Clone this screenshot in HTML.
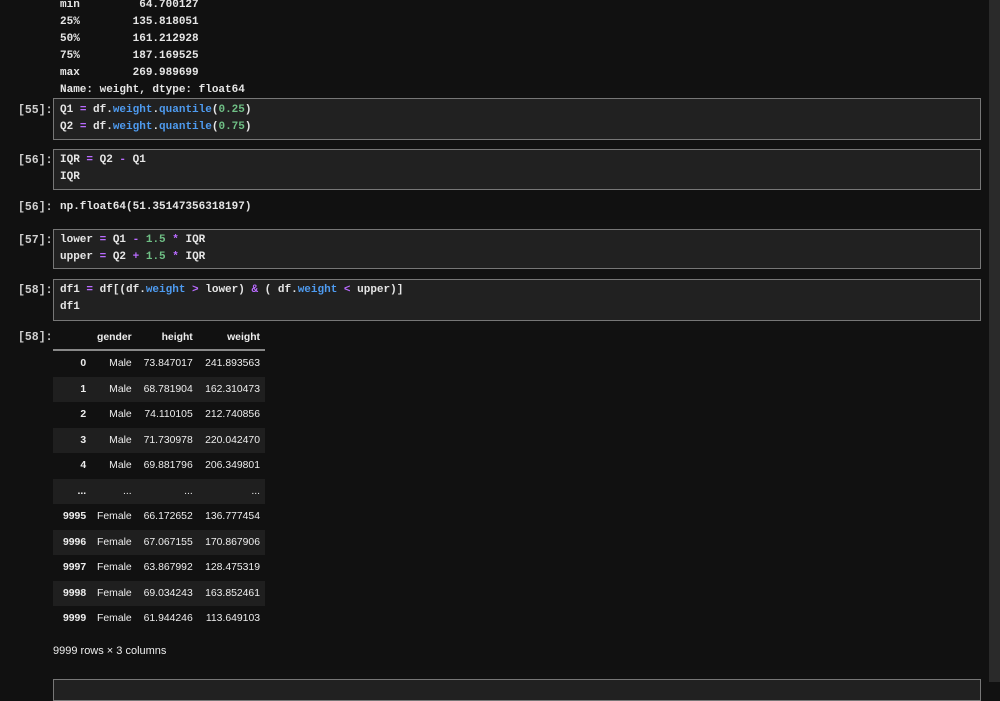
<!DOCTYPE html>
<html><head><style>
body{margin:0;width:1000px;height:682px;background:#111;overflow:hidden;position:relative;font-family:"Liberation Mono",monospace;color:#e6e6e6}
.m{position:absolute;font-size:11px;font-weight:bold;line-height:17px;white-space:pre;color:#e6e6e6}
.p{position:absolute;left:18px;font-size:11.5px;font-weight:bold;color:#d0d0d0;white-space:pre;line-height:17px}
.box{position:absolute;left:53px;width:926px;background:#212121;border:1px solid #777}
.o{color:#b96bff}.b{color:#4e9bf0}.g{color:#6fbf85}
.sb{position:absolute;left:989px;top:0;width:11px;height:682px;background:#2a2a2a}
table{position:absolute;left:53px;top:326px;border-collapse:collapse;font-family:"Liberation Sans",sans-serif;font-size:10.4px;color:#eee;width:212px}
td,th{text-align:right;padding:0 5px 0 3px;height:25.5px;white-space:nowrap}
th{font-weight:bold}
thead th{border-bottom:2px solid #888;height:23px}
tbody tr:nth-child(even){background:#1f1f1f}
tbody th{padding-left:10px}
</style></head><body>
<div class="m" style="left:60px;top:-3px">min         64.700127
25%        135.818051
50%        161.212928
75%        187.169525
max        269.989699
Name: weight, dtype: float64</div>
<div class="p" style="top:102px">[55]:</div>
<div class="box" style="top:98px;height:40px"></div>
<div class="m" style="left:60px;top:102px">Q1 <span class="o">=</span> df.<span class="b">weight</span>.<span class="b">quantile</span>(<span class="g">0.25</span>)
Q2 <span class="o">=</span> df.<span class="b">weight</span>.<span class="b">quantile</span>(<span class="g">0.75</span>)</div>
<div class="p" style="top:152px">[56]:</div>
<div class="box" style="top:149px;height:39px"></div>
<div class="m" style="left:60px;top:152px">IQR <span class="o">=</span> Q2 <span class="o">-</span> Q1
IQR</div>
<div class="p" style="top:199px">[56]:</div>
<div class="m" style="left:60px;top:199px">np.float64(51.35147356318197)</div>
<div class="p" style="top:232px">[57]:</div>
<div class="box" style="top:229px;height:38px"></div>
<div class="m" style="left:60px;top:232px">lower <span class="o">=</span> Q1 <span class="o">-</span> <span class="g">1.5</span> <span class="o">*</span> IQR
upper <span class="o">=</span> Q2 <span class="o">+</span> <span class="g">1.5</span> <span class="o">*</span> IQR</div>
<div class="p" style="top:282px">[58]:</div>
<div class="box" style="top:279px;height:40px"></div>
<div class="m" style="left:60px;top:282px">df1 <span class="o">=</span> df[(df.<span class="b">weight</span> <span class="o">&gt;</span> lower) <span class="o">&amp;</span> ( df.<span class="b">weight</span> <span class="o">&lt;</span> upper)]
df1</div>
<div class="p" style="top:329px">[58]:</div>
<table>
<thead><tr><th style="width:20px"></th><th>gender</th><th>height</th><th>weight</th></tr></thead>
<tbody>
<tr><th>0</th><td>Male</td><td>73.847017</td><td>241.893563</td></tr>
<tr><th>1</th><td>Male</td><td>68.781904</td><td>162.310473</td></tr>
<tr><th>2</th><td>Male</td><td>74.110105</td><td>212.740856</td></tr>
<tr><th>3</th><td>Male</td><td>71.730978</td><td>220.042470</td></tr>
<tr><th>4</th><td>Male</td><td>69.881796</td><td>206.349801</td></tr>
<tr><th>...</th><td>...</td><td>...</td><td>...</td></tr>
<tr><th>9995</th><td>Female</td><td>66.172652</td><td>136.777454</td></tr>
<tr><th>9996</th><td>Female</td><td>67.067155</td><td>170.867906</td></tr>
<tr><th>9997</th><td>Female</td><td>63.867992</td><td>128.475319</td></tr>
<tr><th>9998</th><td>Female</td><td>69.034243</td><td>163.852461</td></tr>
<tr><th>9999</th><td>Female</td><td>61.944246</td><td>113.649103</td></tr>
</tbody></table>
<div style="position:absolute;left:53px;top:645px;font-family:'Liberation Sans',sans-serif;font-size:11px;color:#eee">9999 rows × 3 columns</div>
<div class="box" style="top:679px;height:20px"></div>
<div class="sb"></div>
</body></html>
